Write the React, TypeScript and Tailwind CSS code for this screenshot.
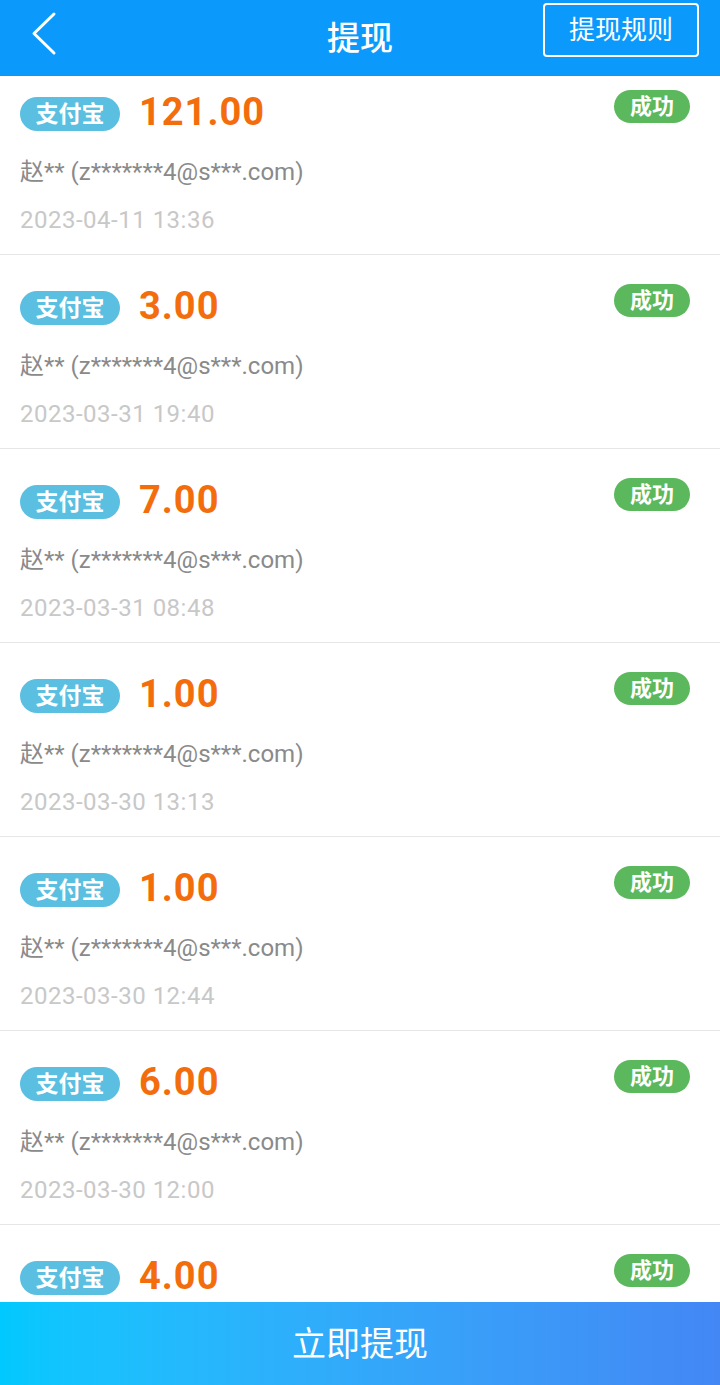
const FONT = "font-['Roboto','Noto_Sans_CJK_SC',sans-serif]";

type Record = { amount: string; time: string };

const records: Record[] = [
  { amount: '121.00', time: '2023-04-11 13:36' },
  { amount: '3.00', time: '2023-03-31 19:40' },
  { amount: '7.00', time: '2023-03-31 08:48' },
  { amount: '1.00', time: '2023-03-30 13:13' },
  { amount: '1.00', time: '2023-03-30 12:44' },
  { amount: '6.00', time: '2023-03-30 12:00' },
  { amount: '4.00', time: '2023-03-30 11:20' },
];

function Header() {
  return (
    <div className="relative z-10 flex h-[76px] shrink-0 items-center justify-center bg-[#0b9afc]">
      <svg className="absolute left-[26px] top-[6px]" width="40" height="56" viewBox="0 0 40 56">
        <polyline points="28,8 8,27.5 28,47" fill="none" stroke="white" strokeWidth="3" strokeLinecap="round" strokeLinejoin="round" />
      </svg>
      <h1 className="text-[33px] font-medium leading-none text-white">提现</h1>
      <button className="absolute right-[21px] top-[3px] flex h-[54px] w-[156px] items-center justify-center rounded-[4px] border-2 border-white text-[26px] leading-none text-white">
        提现规则
      </button>
    </div>
  );
}

function RecordItem({ amount, time }: Record) {
  return (
    <div className="h-[194px] shrink-0 border-b border-[#e6e6e6] pl-5 pr-[30px] pt-[29px]">
      <div className="flex items-start justify-between">
        <div className="mt-[7px] flex items-start gap-[19px]">
          <span className="flex h-[34px] w-[100px] items-center justify-center rounded-full bg-[#5bbfe1] text-[23px] font-bold leading-none text-white">
            支付宝
          </span>
          <span className="-mt-[4px] text-[38px] font-bold leading-[38px] tracking-[1px] text-[#f36d0c]">{amount}</span>
        </div>
        <span className="flex h-[33px] w-[76px] items-center justify-center rounded-full bg-[#5cb85c] text-[22px] font-bold leading-none text-white">
          成功
        </span>
      </div>
      <p className="mt-[17px] text-[24px] leading-[48px] text-[#8a8a8a]">赵** (z*******4@s***.com)</p>
      <p className="text-[24px] leading-[48px] tracking-[0.5px] text-[#c8c8c8]">{time}</p>
    </div>
  );
}

export default function App() {
  return (
    <div className={`flex h-[1385px] w-[720px] flex-col overflow-hidden bg-white ${FONT}`}>
      <Header />
      <div className="flex-1 overflow-hidden">
        <div className="-mt-[15px] flex flex-col">
          {records.map((r, i) => (
            <RecordItem key={i} {...r} />
          ))}
        </div>
      </div>
      <button className="flex h-[83px] w-full shrink-0 items-center justify-center bg-gradient-to-r from-[#00c9fe] to-[#4387f5] text-[34px] leading-none text-white">
        立即提现
      </button>
    </div>
  );
}
